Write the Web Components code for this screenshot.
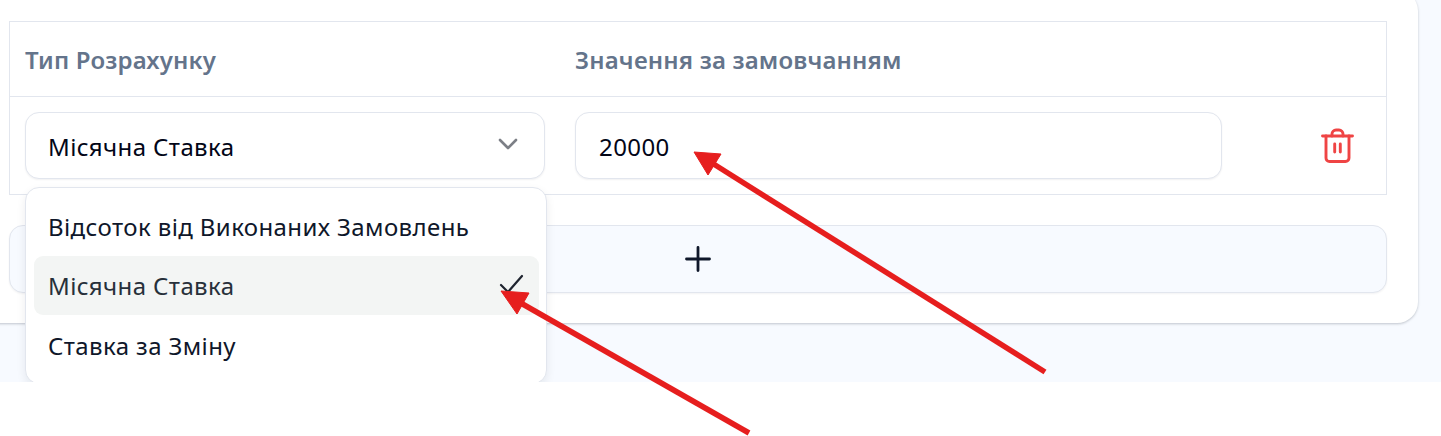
<!DOCTYPE html>
<html lang="uk">
<head>
<meta charset="utf-8">
<title>Тип Розрахунку</title>
<style>
  html, body { margin: 0; background: #fff; }
  body { font-family: "Noto Sans", "Open Sans", sans-serif; position: relative; height: 436px; overflow: hidden; }
</style>
</head>
<body>
<pay-page>
  <pay-card>
    <pay-table>
      <pay-head slot="head">
        <span>Тип Розрахунку</span>
        <span>Значення за замовчанням</span>
      </pay-head>
      <pay-row slot="row">
        <select-field value="Місячна Ставка">
          <option-item>Відсоток від Виконаних Замовлень</option-item>
          <option-item selected>Місячна Ставка</option-item>
          <option-item>Ставка за Зміну</option-item>
        </select-field>
        <text-field value="20000"></text-field>
        <trash-button></trash-button>
      </pay-row>
    </pay-table>
    <add-button></add-button>
  </pay-card>
</pay-page>
<note-arrows></note-arrows>

<script>
// little helper so every element gets an open shadow root from a string
function define(name, html, extra) {
    class El extends HTMLElement {
        constructor() {
            super();
            this.attachShadow({ mode: "open" }).innerHTML = html;
        }
        connectedCallback() {
            if (extra) extra(this);
        }
    }
    customElements.define(name, El);
}

define("pay-page", `
  <style>
    :host { display: flex; justify-content: flex-end; align-items: flex-start; height: 382px; background: #f7faff; overflow: hidden; padding-right: 23px; box-sizing: border-box; }
  </style>
  <slot></slot>
`);

define("pay-card", `
  <style>
    :host { display: flex; flex-direction: column; gap: 30px; box-sizing: border-box; width: 1441px; flex: none; margin-top: -10px; padding: 31px 31px 30px 32px; background: #fff; border-radius: 21px; box-shadow: 0 1px 3px rgba(15,23,42,.16), 0 1px 2px rgba(15,23,42,.08); }
  </style>
  <slot></slot>
`);

define("pay-table", `
  <style>
    :host { display: block; border: 1px solid #e2e6ee; }
  </style>
  <slot name="head"></slot>
  <slot name="row"></slot>
`);

define("pay-head", `
  <style>
    :host { display: grid; grid-template-columns: 550px 677px 1fr; height: 75px; align-items: center; border-bottom: 1px solid #e2e6ee; box-sizing: border-box; font-size: 24px; font-weight: 600; letter-spacing: .16px; color: #64748b; }
    ::slotted(span) { padding-left: 15px; }
  </style>
  <slot></slot>
`);

define("pay-row", `
  <style>
    :host { display: grid; grid-template-columns: 550px 677px 1fr; height: 97px; align-items: start; padding-top: 15px; box-sizing: border-box; letter-spacing: .4px; }
  </style>
  <slot></slot>
`);

define("select-field", `
  <style>
    :host { display: block; position: relative; margin: 0 15px; }
    .box { display: flex; align-items: center; justify-content: space-between; box-sizing: border-box; height: 67px; padding: 2px 26px 0 22px; border: 1px solid #e2e6ee; border-radius: 14px; background: #fff; box-shadow: 0 1px 2px rgba(15,23,42,.06); font-size: 24px; color: #020617; }
    svg { display: block; margin-top: -5px; }
    .menu { position: absolute; left: 0; top: 75px; width: 522px; box-sizing: border-box; padding: 8px 7px 8px 8px; background: #fff; border: 1px solid #e2e6ee; border-radius: 14px; box-shadow: 0 4px 10px rgba(15,23,42,.08); }
  </style>
  <div class="box">
    <span id="value"></span>
    <svg width="20" height="14" viewBox="0 0 20 14" fill="none" stroke="#7c7f86" stroke-width="2.6" stroke-linecap="round" stroke-linejoin="round"><path d="M2 3l8 8 8-8"/></svg>
  </div>
  <div class="menu"><slot></slot></div>
`, el => {
    el.shadowRoot.getElementById("value").textContent = el.getAttribute("value");
});

define("option-item", `
  <style>
    :host { display: flex; align-items: center; justify-content: space-between; height: 60px; box-sizing: border-box; padding: 0 16px 0 14px; border-radius: 9px; font-size: 24px; color: #0f172a; }
    :host([selected]) { background: #f3f5f4; color: #27303a; height: 59px; }
    svg { display: none; margin-right: -2px; margin-top: -4px; }
    :host([selected]) svg { display: block; }
  </style>
  <slot></slot>
  <svg width="26" height="24" viewBox="0 0 26 24" fill="none" stroke="#1f2530" stroke-width="2.2" stroke-linecap="round" stroke-linejoin="round"><path d="M2 13l7 7L23 4"/></svg>
`);

define("text-field", `
  <style>
    :host { display: block; margin: 0 15px; }
    .box { display: flex; align-items: center; box-sizing: border-box; height: 67px; padding: 2px 23px 0; border: 1px solid #e2e6ee; border-radius: 14px; background: #fff; box-shadow: 0 1px 2px rgba(15,23,42,.06); font-size: 24px; color: #020617; }
  </style>
  <div class="box" id="box"></div>
`, el => {
    el.shadowRoot.getElementById("box").textContent = el.getAttribute("value");
});

define("trash-button", `
  <style>
    :host { display: flex; justify-content: center; padding-left: 50px; margin-top: 14px; }
    svg { display: block; }
  </style>
  <svg width="36" height="40" viewBox="0 0 36 40" fill="none" stroke="#ef4444" stroke-width="2.9" stroke-linecap="round" stroke-linejoin="round">
    <path d="M3.5 10h30"/>
    <path d="M7 10v22a3.5 3.5 0 0 0 3.5 3.5h16a3.5 3.5 0 0 0 3.5-3.5V10"/>
    <path d="M13 10V8a4 4 0 0 1 4-4h3a4 4 0 0 1 4 4v2"/>
    <path d="M15.7 18v8M21.3 18v8"/>
  </svg>
`);

define("add-button", `
  <style>
    :host { display: flex; align-items: center; justify-content: center; height: 68px; box-sizing: border-box; border: 1px solid #e2e6ee; border-radius: 14px; background: #f7faff; box-shadow: 0 1px 2px rgba(15,23,42,.05); }
    svg { display: block; }
  </style>
  <svg width="30" height="30" viewBox="0 0 30 30" fill="none" stroke="#0f172a" stroke-width="2.8" stroke-linecap="round"><path d="M3.5 15h23M15 3.5v23"/></svg>
`);

// red annotation arrows drawn over the whole shot
define("note-arrows", `
  <style>
    :host { position: absolute; left: 0; top: 0; width: 1441px; height: 436px; pointer-events: none; }
    svg { display: block; }
  </style>
  <svg width="1441" height="436" viewBox="0 0 1441 436">
    <g fill="#e61e1e" stroke="#e61e1e">
      <path d="M1045 372 L712 163" stroke-width="5.5" fill="none"/>
      <path d="M694 152 L721 154 L708 175 Z" stroke-width="1"/>
      <path d="M749 433 L519 302" stroke-width="5.5" fill="none"/>
      <path d="M501 291 L529 293 L517 314 Z" stroke-width="1"/>
    </g>
  </svg>
`);
</script>
</body>
</html>
